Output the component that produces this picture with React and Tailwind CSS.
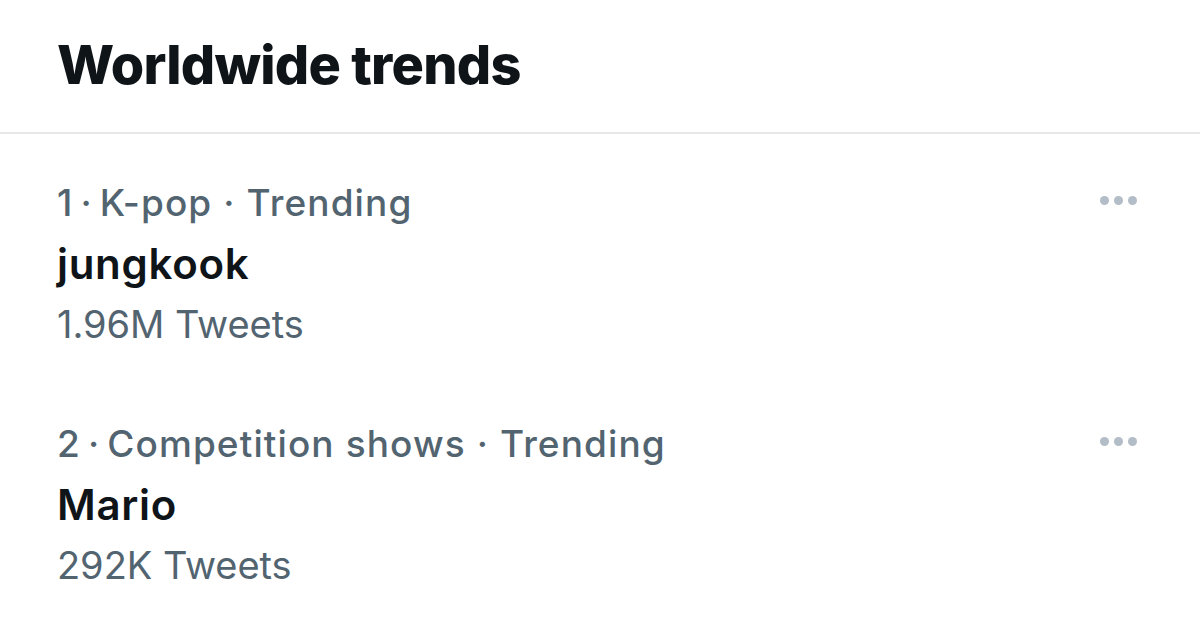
import React from "react";

function Dots() {
  return (
    <div className="flex items-center gap-[5px] h-[54px]">
      <span className="block w-[9px] h-[9px] rounded-full bg-[#b3bdc7]" />
      <span className="block w-[9px] h-[9px] rounded-full bg-[#b3bdc7]" />
      <span className="block w-[9px] h-[9px] rounded-full bg-[#b3bdc7]" />
    </div>
  );
}

function Trend({ rank, category, name, count }) {
  return (
    <div className="flex items-start justify-between pl-[57px] pr-[63px]">
      <div className="flex flex-col">
        <div className="text-[37px] leading-[60px] font-medium text-[#536471] tracking-[1.1px] whitespace-nowrap">
          {rank}
          <span className="mx-[7px]">·</span>
          {category} · Trending
        </div>
        <div className="text-[42px] leading-[61px] font-semibold text-[#0f1419] tracking-[0.7px] whitespace-nowrap">
          {name}
        </div>
        <div className="text-[38px] leading-[60px] font-normal text-[#536471] tracking-[-0.05px] whitespace-nowrap">
          {count} Tweets
        </div>
      </div>
      <Dots />
    </div>
  );
}

export default function App() {
  return (
    <div
      className="w-[1200px] h-[624px] bg-white overflow-hidden"
      style={{ fontFamily: "Inter, 'Noto Sans', sans-serif" }}
    >
      <div className="h-[134px] flex items-center pl-[57px] border-b-2 border-[#e6e7e8]">
        <h1 className="text-[54px] leading-none font-extrabold text-[#0f1419] tracking-[-0.75px] -mt-[2px]">
          Worldwide trends
        </h1>
      </div>
      <div className="flex flex-col pt-[39px] gap-[60px]">
        <Trend rank="1" category="K-pop" name="jungkook" count="1.96M" />
        <Trend rank="2" category="Competition shows" name="Mario" count="292K" />
      </div>
    </div>
  );
}
